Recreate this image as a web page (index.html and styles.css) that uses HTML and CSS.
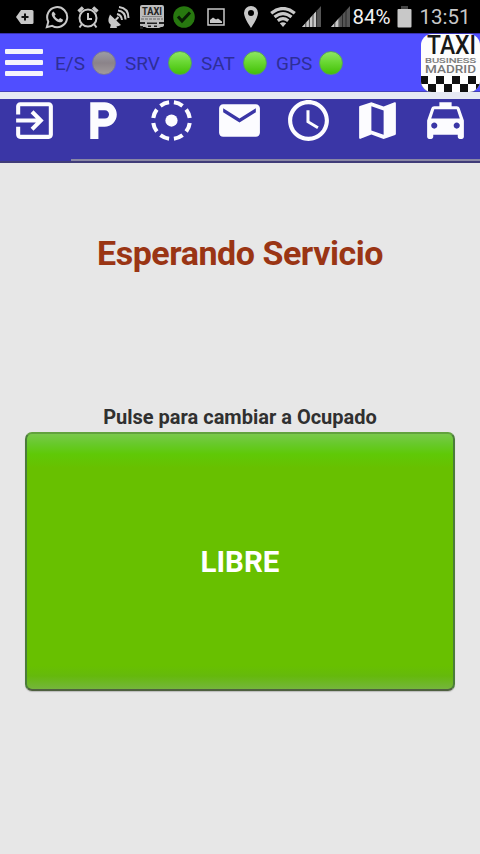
FILE: index.html
```html
<!DOCTYPE html>
<html lang="es">
<head>
<meta charset="utf-8">
<title>Taxi Business Madrid</title>
<link rel="stylesheet" href="styles.css">
</head>
<body>
<div class="status">
  <span><svg width="18" height="14" viewBox="0 0 18 14"><path fill="#c8c8c8" d="M5 0h11q1.500 0 1.500 1.500v11q0 1.500-1.500 1.500H5L0 7z"/><path stroke="#111" stroke-width="2" d="M5.500 7h7M9 3.500v7"/></svg></span>
  <span><svg width="24" height="24" viewBox="0 0 24 24"><path fill="none" stroke="#c8c8c8" stroke-width="2" d="M1.800 22.200l1.500-5.500A10 10 0 1 1 7.200 20.800z"/><path fill="#c8c8c8" d="M8.500 6.500c-1.800.8-2.300 2.700-1.300 4.700 1.500 3 4 5.200 7 6 2 .5 3.800-.6 3.900-2.500l-3-1.700-1.500 1.500c-1.800-.7-3.200-2-4-3.700l1.100-1.500z"/></svg></span>
  <span><svg width="22" height="24" viewBox="0 0 22 24"><g fill="none" stroke="#c8c8c8" stroke-width="2"><circle cx="11" cy="13" r="8.500"/><path d="M11 8v6h4M5 19l-2.500 3.500M17 19l2.500 3.500"/><path stroke-width="3.500" d="M1.500 6.500L6 2.500M20.500 6.500L16 2.500"/></g></svg></span>
  <span><svg width="22" height="24" viewBox="0 0 22 24"><path fill="#c8c8c8" d="M2 9.500Q-2 18 4 20.500q5 2 9-.5zM3 19l-1 4h7l-1-3z"/><path fill="none" stroke="#c8c8c8" stroke-width="2" d="M7.500 15l3-3M9 9q4.500 1 5 6M10 5.500q7.500 1 7.500 9M11 2q9.500 1 9.500 11"/></svg></span>
  <span><svg width="26" height="25" viewBox="0 0 26 25"><path fill="#bcbcbc" d="M3 1h20q2 0 2 2v18q0 2-3 2l-2 1H8l-2-1H3q-2 0-2-2V3q0-2 2-2z"/><text class="mini-taxi" x="3" y="10.500" textLength="20" lengthAdjust="spacingAndGlyphs">TAXI</text><path stroke="#888" d="M3 12.500h20"/><path stroke="#666" stroke-dasharray="3 1" d="M2 15h22"/><path fill="#222" d="M1 18h5v2H1zM8 18.500h10v1.500H8zM20 18h5v2h-5zM1 22h3v3H1zM9 21.500h3v1.500H9zM15 21.500h3v1.500h-3z"/></svg></span>
  <span><svg width="24" height="24" viewBox="0 0 24 24"><circle cx="12" cy="12" r="10.800" fill="#27780f"/><path fill="none" stroke="#071c04" stroke-width="3" d="M6 11.500l4 4.500 8-8.500"/></svg></span>
  <span><svg width="18" height="18" viewBox="0 0 18 18"><path fill="none" stroke="#c8c8c8" stroke-width="1.500" d="M1 1h16v16H1z"/><path fill="#c8c8c8" d="M3 15v-3l3-2.500 3 2 2-1 4 3V15z"/></svg></span>
  <span><svg width="16" height="22" viewBox="0 0 16 22"><path fill="#c8c8c8" fill-rule="evenodd" d="M8 0a7 7 0 0 0-7 7c0 5 7 15 7 15s7-10 7-15a7 7 0 0 0-7-7zm0 4a3 3 0 1 1 0 6 3 3 0 0 1 0-6z"/></svg></span>
  <span><svg width="26" height="20" viewBox="0 0 26 20"><g fill="none" stroke="#c8c8c8" stroke-width="3.200"><path d="M1.200 6.200Q13-3.200 24.800 6.200M4.500 10Q13 3.200 21.500 10M7.800 13.700Q13 9.600 18.200 13.700"/></g><path fill="#c8c8c8" d="M9.800 16.300q3.200-2.200 6.400 0L13 20z"/></svg></span>
  <span><svg width="19" height="21" viewBox="0 0 19 21"><path fill="#555" d="M0 21L19 0v21z"/><path fill="#c8c8c8" d="M0 21L14 5.500V21z"/><path stroke="#222" stroke-width=".8" d="M3.800 16v5M7.400 12v9M11 8v13M14.600 4v17"/></svg></span>
  <span><svg width="19" height="21" viewBox="0 0 19 21"><path fill="#555" d="M0 21L19 0v21z"/><path fill="#c8c8c8" d="M0 21L8.500 11.600V21z"/><path stroke="#222" stroke-width=".8" d="M3.800 16v5M8 12v9M11.500 8v13M15 4v17"/></svg></span>
  <span class="percent">84%</span>
  <span><svg width="15" height="22" viewBox="0 0 15 22"><path fill="#444" d="M4 0h7v3H4z"/><path fill="#c8c8c8" d="M1.500 3h12q1 0 1 1v16.500q0 1-1 1h-12q-1 0-1-1V4q0-1 1-1z"/></svg></span>
  <span class="clock">13:51</span>
</div>
<header class="header">
  <div class="menu"><i></i><i></i><i></i></div>
  <div class="leds">
    <span class="es">E/S</span><b class="led off"></b>
    <span class="srv">SRV</span><b class="led"></b>
    <span class="sat">SAT</span><b class="led"></b>
    <span class="gps">GPS</span><b class="led"></b>
  </div>
  <svg class="logo" width="60" height="58" viewBox="0 0 60 58">
    <defs><clipPath id="round"><rect x="1" width="59" height="58" rx="11"/></clipPath></defs>
    <g clip-path="url(#round)">
      <rect width="60" height="58" fill="#fdfdfd"/>
      <path d="M0 42h60v16H0z" fill="#111"/>
      <path fill="#fff" d="M8 42h8v8H8zM24 42h8v8h-8zM40 42h8v8h-8zM56 42h4v8h-4zM1 50h7v8H1zM16 50h8v8h-8zM32 50h8v8h-8zM48 50h8v8h-8z"/>
    </g>
    <text class="logo-taxi" x="7" y="20" textLength="49" lengthAdjust="spacingAndGlyphs">TAXI</text>
    <text class="logo-business" x="5" y="29" textLength="51" lengthAdjust="spacingAndGlyphs">BUSINESS</text>
    <text class="logo-madrid" x="5" y="38.700" textLength="51" lengthAdjust="spacingAndGlyphs">MADRID</text>
  </svg>
</header>
<nav class="tools">
  <svg viewBox="0 0 24 24"><path d="M10.090 15.590L11.500 17l5-5-5-5-1.410 1.410L12.670 11H3v2h9.670l-2.580 2.590zM19 3H5c-1.110 0-2 .9-2 2v4h2V5h14v14H5v-4H3v4c0 1.100.89 2 2 2h14c1.100 0 2-.9 2-2V5c0-1.100-.9-2-2-2z"/></svg>
  <svg viewBox="0 0 24 24"><path d="M13 3H6v18h4v-6h3c3.310 0 6-2.690 6-6s-2.690-6-6-6zm.2 8H10V7h3.200c1.100 0 2 .9 2 2s-.9 2-2 2z"/></svg>
  <svg viewBox="0 0 24 24"><circle cx="12" cy="12" r="3"/><circle class="dashes" cx="12" cy="12" r="9" pathLength="80"/></svg>
  <svg viewBox="0 0 24 24"><path d="M20 4H4c-1.100 0-1.990.9-1.990 2L2 18c0 1.100.9 2 2 2h16c1.100 0 2-.9 2-2V6c0-1.100-.9-2-2-2zm0 4l-8 5-8-5V6l8 5 8-5v2z"/></svg>
  <svg viewBox="0 0 24 24"><path d="M11.990 2C6.470 2 2 6.480 2 12s4.470 10 9.990 10C17.520 22 22 17.520 22 12S17.520 2 11.990 2zM12 20c-4.420 0-8-3.580-8-8s3.580-8 8-8 8 3.580 8 8-3.580 8-8 8zm.5-13H11v6l5.250 3.150.75-1.230-4.500-2.670z"/></svg>
  <svg viewBox="0 0 24 24"><path d="M20.500 3l-.16.030L15 5.100 9 3 3.360 4.900c-.21.070-.36.250-.36.480V20.500c0 .28.220.5.500.5l.16-.03L9 18.900l6 2.100 5.640-1.900c.21-.07.36-.25.360-.48V3.500c0-.28-.22-.5-.5-.5zM15 19l-6-2.110V5l6 2.110V19z"/></svg>
  <svg viewBox="0 0 24 24"><path d="M18.920 6.010C18.720 5.420 18.160 5 17.500 5H15V3H9v2H6.500c-.66 0-1.210.42-1.420 1.010L3 12v8c0 .55.450 1 1 1h1c.55 0 1-.45 1-1v-1h12v1c0 .55.450 1 1 1h1c.55 0 1-.45 1-1v-8l-2.080-5.990zM6.500 16c-.83 0-1.500-.67-1.500-1.500S5.670 13 6.500 13s1.500.67 1.500 1.500S7.330 16 6.500 16zm11 0c-.83 0-1.500-.67-1.500-1.500s.67-1.500 1.500-1.500 1.500.67 1.500 1.500-.67 1.500-1.500 1.500zM5 11l1.500-4.500h11L19 11H5z"/></svg>
</nav>
<main class="main">
  <h1>Esperando Servicio</h1>
  <p>Pulse para cambiar a Ocupado</p>
  <button class="free">LIBRE</button>
</main>
</body>
</html>
```

FILE: styles.css
```css
* { box-sizing: border-box; }
body { margin: 0; width: 480px; height: 854px; overflow: hidden; background: #e7e7e7; font-family: Roboto, "Liberation Sans", sans-serif; display: flex; flex-direction: column; }
svg { display: block; flex: none; }

.status { height: 33px; background: #000; color: #c8c8c8; display: grid; padding-left: 8px; grid-template-columns: 33px 31px 32px 30px 36px 27px 38px 31px 33px 24px 34px 29px 36px 46px; }
.status span { display: flex; justify-content: center; align-items: center; white-space: nowrap; font-size: 20.500px; }
.status .percent { color: #f2f2f2; font-size: 20.500px; }
.mini-taxi { font: bold 11px Roboto, sans-serif; fill: #222; }

.header { height: 59px; background: #504eff; border-top: 1px solid #3832b0; border-bottom: 1px solid #4440b8; display: flex; align-items: center; }
.menu { width: 38px; margin-left: 5px; display: grid; gap: 6px; }
.menu i { height: 5px; background: #f4f4fc; border-radius: 1px; }
.leds { flex: 1; display: flex; align-items: center; font-size: 19px; color: #2e2e98; }
.leds span { line-height: 24px; margin-top: 2px; white-space: nowrap; }
.es { width: 37px; margin-left: 12px; }
.srv { width: 43px; margin-left: 8px; }
.sat { width: 42px; margin-left: 8px; }
.gps { width: 43px; margin-left: 8px; }
.led { width: 24px; height: 24px; margin-right: 1px; flex: none; border-radius: 50%; background: linear-gradient(#8ee663, #6ad834 45%, #43c006); border: 1px solid #55a060; }
.led.off { background: linear-gradient(#9c9ca4, #8b8389 50%, #a19b9c); border-color: #77759c; }
.logo { align-self: flex-start; }
.logo-taxi { font: 500 26px Roboto, sans-serif; fill: #171717; }
.logo-business { font: 7.800px Roboto, sans-serif; fill: #777; stroke: #777; stroke-width: .2px; }
.logo-madrid { font: 500 10.500px Roboto, sans-serif; fill: #777; }

.tools { height: 71px; border-top: 7px solid #e6e9f3; background: linear-gradient(#8987a5, #8987a5) 71px 60px / 409px 2px no-repeat, linear-gradient(#403c78, #403c78) 0 62px / 480px 2px no-repeat, #3a36a6; display: grid; grid-template-columns: repeat(7, 1fr); justify-items: center; }
.tools svg { width: 49px; height: 49px; margin-top: -3px; fill: #fcfcff; }
.tools .dashes { fill: none; stroke: #fcfcff; stroke-width: 2; stroke-dasharray: 6.500 3.500; stroke-dashoffset: -1.750; }

.main { flex: 1; padding: 70px 25px 0; text-align: center; display: flex; flex-direction: column; }
h1 { margin: 0; height: 40px; line-height: 40px; font-size: 34px; letter-spacing: -.45px; font-weight: 700; color: #9a3514; white-space: nowrap; }
p { margin: 131px 0 0; height: 28px; line-height: 27px; font-size: 20px; font-weight: 700; color: #303030; }
.free { width: 430px; height: 259px; padding: 0; border: 2px solid #4b7d39; border-top-color: #62a23d; border-bottom-color: #4e603f; border-radius: 7px; background: linear-gradient(#7ac94b 0, #67c92a 10px, #5fc907 20px, #68c000 34px, #68c000 232px, #65b90c 242px, #75b53c 100%); color: #fff; font: 700 29.500px Roboto, sans-serif; box-shadow: 0 1px 1px #bbb; }
```
